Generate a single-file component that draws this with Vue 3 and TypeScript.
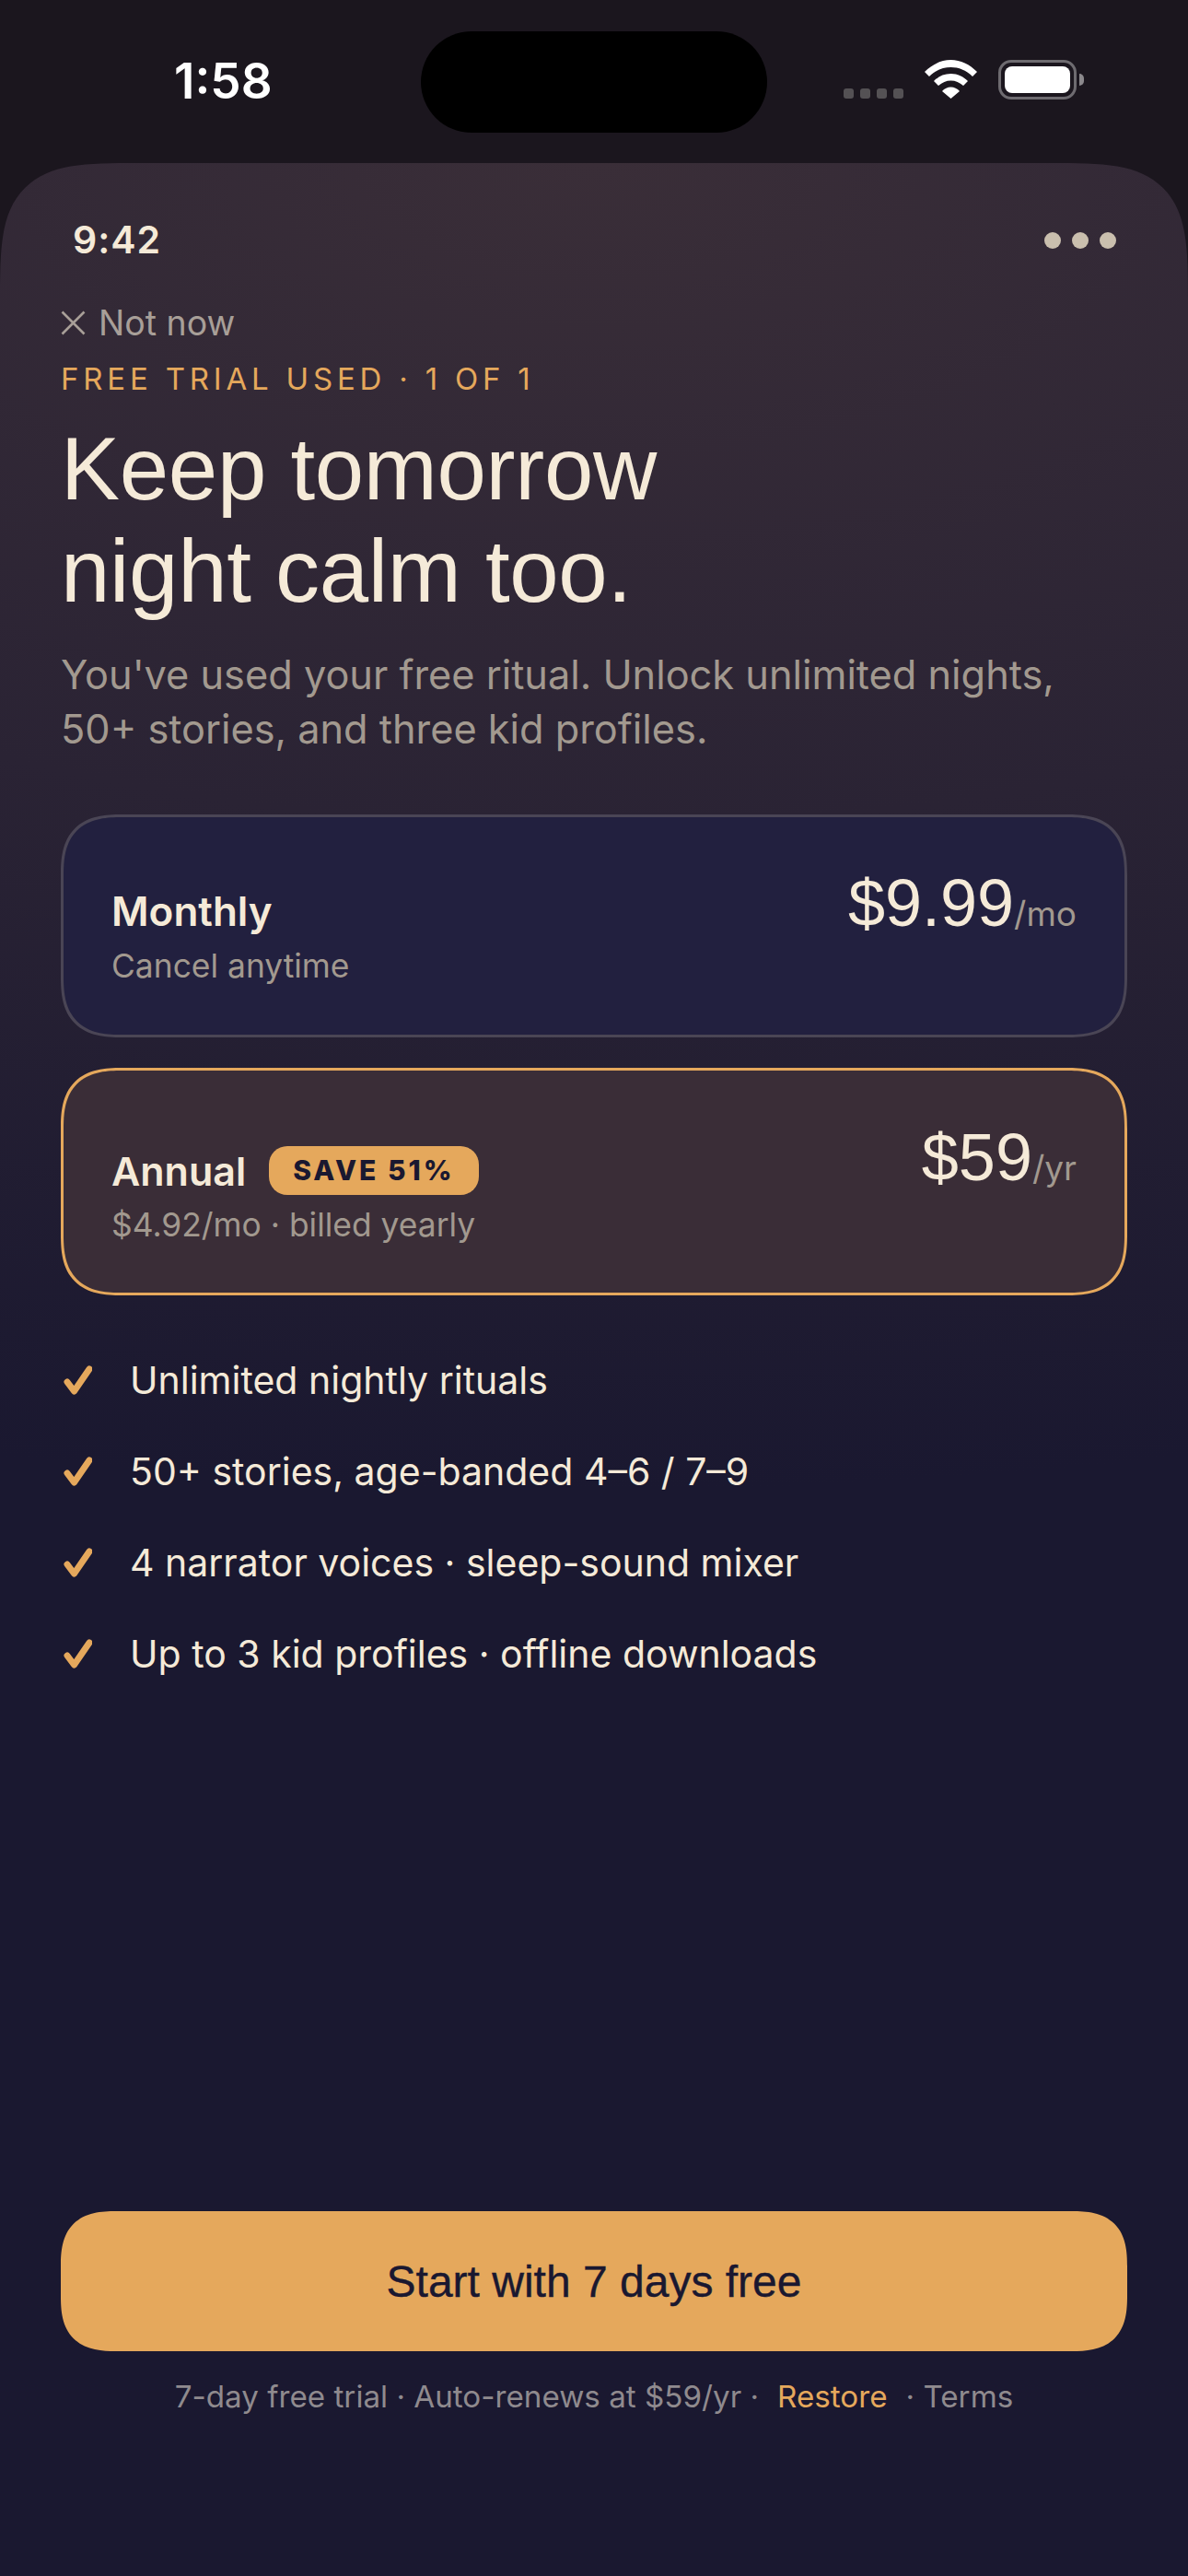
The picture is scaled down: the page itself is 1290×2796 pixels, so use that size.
<template>
  <div class="phone">
    <header class="status-bar">
      <span class="clock">1:58</span>
      <div class="island"></div>
      <div class="status-icons">
        <div class="signal">
          <i v-for="n in 4" :key="n"></i>
        </div>
        <svg class="wifi" width="57" height="42" viewBox="0 0 57 42" fill="#fff">
          <path d="M0 13C8 5 18 0 28.5 0S49 5 57 13L52 18C45 11 37 8 28.5 8S12 11 5 18Z" />
          <path d="M10 23C15 18 21 15 28.5 15S42 18 47 23L42 28C38 24.5 33.5 22.5 28.5 22.5S19 24.5 15 28Z" />
          <path d="M19 34C21.5 31 25 29.5 28.5 29.5S35.5 31 38 34L28.5 42Z" />
        </svg>
        <div class="battery"><div class="battery-level"></div></div>
      </div>
    </header>

    <main class="sheet">
      <div class="sheet-head">
        <span class="sheet-time">9:42</span>
        <div class="more">
          <i v-for="n in 3" :key="n"></i>
        </div>
      </div>

      <div class="close">
        <svg width="27" height="27" viewBox="0 0 27 27" fill="none" stroke="#a89f98" stroke-width="2.6">
          <path d="M1.5 1.5L25.5 25.5M25.5 1.5L1.5 25.5" />
        </svg>
        <span>Not now</span>
      </div>

      <div class="eyebrow">FREE TRIAL USED · 1 OF 1</div>
      <h1 class="title">Keep tomorrow<br />night calm too.</h1>
      <p class="lead">You've used your free ritual. Unlock unlimited nights,<br />50+ stories, and three kid profiles.</p>

      <div class="plans">
        <div
          v-for="plan in plans"
          :key="plan.name"
          class="plan"
          :class="{ selected: plan.selected }"
        >
          <div class="plan-left">
            <div class="plan-name-row">
              <span class="plan-name">{{ plan.name }}</span>
              <span v-if="plan.badge" class="badge">{{ plan.badge }}</span>
            </div>
            <div class="plan-sub">{{ plan.sub }}</div>
          </div>
          <div class="plan-price">{{ plan.price }}<span class="plan-unit">{{ plan.unit }}</span></div>
        </div>
      </div>

      <ul class="features">
        <li v-for="item in features" :key="item">
          <svg width="34" height="32" viewBox="0 0 34 32" fill="none" stroke="#e5a85c" stroke-width="7" stroke-linecap="round" stroke-linejoin="round">
            <path d="M7 18L14.5 28L31 4" />
          </svg>
          <span>{{ item }}</span>
        </li>
      </ul>

      <button class="cta">Start with 7 days free</button>
      <div class="legal">
        <span>7-day free trial · Auto-renews at $59/yr · </span>
        <span class="restore">Restore</span>
        <span>· Terms</span>
      </div>
    </main>
  </div>
</template>

<script setup lang="ts">
interface Plan {
  name: string
  sub: string
  price: string
  unit: string
  badge?: string
  selected?: boolean
}

const plans: Plan[] = [
  { name: 'Monthly', sub: 'Cancel anytime', price: '$9.99', unit: '/mo' },
  { name: 'Annual', sub: '$4.92/mo · billed yearly', price: '$59', unit: '/yr', badge: 'SAVE 51%', selected: true }
]

const features = [
  'Unlimited nightly rituals',
  '50+ stories, age-banded 4–6 / 7–9',
  '4 narrator voices · sleep-sound mixer',
  'Up to 3 kid profiles · offline downloads'
]
</script>

<style>
html,
body {
  margin: 0;
  background: #1a1830;
}
</style>

<style scoped>
.phone {
  width: 1290px;
  height: 2796px;
  display: flex;
  flex-direction: column;
  background: #1b161e;
  font-family: Inter, "Liberation Sans", sans-serif;
  overflow: hidden;
}

.status-bar {
  height: 177px;
  flex-shrink: 0;
  display: grid;
  grid-template-columns: 1fr 376px 1fr;
  box-sizing: border-box;
  padding-top: 34px;
}

.clock {
  margin: 22px 0 0 189px;
  font: 600 53px/64px Inter, sans-serif;
  color: #fff;
}

.island {
  height: 110px;
  border-radius: 55px;
  background: #000;
}

.status-icons {
  display: flex;
  align-items: flex-start;
  margin: 31px 0 0 83px;
}

.signal {
  display: flex;
  gap: 7px;
  margin-top: 31px;
  margin-right: 23px;
}

.signal i {
  width: 11px;
  height: 11px;
  border-radius: 3px;
  background: #545154;
}

.wifi {
  margin-right: 23px;
}

.battery {
  position: relative;
  width: 85px;
  height: 43px;
  box-sizing: border-box;
  border: 3px solid #6e6b70;
  border-radius: 14px;
  padding: 4px;
}

.battery::after {
  content: '';
  position: absolute;
  left: 85px;
  top: 12px;
  width: 5px;
  height: 13px;
  border-radius: 0 5px 5px 0;
  background: #8b888c;
}

.battery-level {
  height: 100%;
  border-radius: 8px;
  background: #fff;
}

.sheet {
  flex: 1;
  display: flex;
  flex-direction: column;
  box-sizing: border-box;
  padding: 54px 66px 172px;
  border-radius: 150px 150px 0 0;
  corner-shape: superellipse(1.8);
  background: radial-gradient(2880px 1440px at 50% 0, #3a2e38 0, #1a1830 100%) #1a1830;
}

.sheet-head {
  display: flex;
  justify-content: space-between;
  align-items: center;
  height: 58px;
  margin-bottom: 2px;
  padding: 0 12px 0 13px;
}

.sheet-time {
  font-size: 41px;
  font-weight: 600;
  letter-spacing: 1px;
  color: #f5ead8;
}

.more {
  display: flex;
  gap: 12px;
  margin-top: 2px;
}

.more i {
  width: 18px;
  height: 18px;
  border-radius: 50%;
  background: #cabfae;
}

.close {
  display: flex;
  align-items: center;
  gap: 14px;
  height: 50px;
  margin-top: 34px;
  font-size: 37.5px;
  color: #a89f98;
}

.eyebrow {
  margin-top: 16px;
  font-size: 33px;
  line-height: 40px;
  letter-spacing: 4.8px;
  color: #e5a85c;
}

.title {
  margin: 22px 0 0;
  font: 400 96px/111px "Liberation Sans", sans-serif;
  letter-spacing: -0.3px;
  color: #f5ead8;
}

.lead {
  margin: 28px 0 0;
  font-size: 43.3px;
  line-height: 59px;
  color: #a2998f;
}

.plans {
  display: flex;
  flex-direction: column;
  gap: 33px;
  margin-top: 63px;
}

.plan {
  display: flex;
  justify-content: space-between;
  align-items: flex-start;
  padding: 53px 52px 50px 52px;
  border: 3px solid #4a4555;
  border-radius: 66px;
  corner-shape: superellipse(1.4);
  background: #22203f;
}

.plan.selected {
  padding-top: 54px;
  padding-bottom: 49px;
  border-color: #e5a85c;
  background: #3a2d37;
}

.plan-left {
  padding-top: 21px;
}

.selected .plan-left {
  padding-top: 24px;
}

.plan-name-row {
  display: flex;
  align-items: center;
  gap: 25px;
}

.plan-name {
  font-size: 44px;
  line-height: 56px;
  font-weight: 600;
  color: #f5ead8;
}

.selected .plan-name {
  font-size: 43px;
}

.badge {
  height: 53px;
  padding: 0 26px;
  margin: 4px 0 5px;
  border-radius: 20px;
  background: #e5a85c;
  font-size: 30px;
  line-height: 53px;
  font-weight: 800;
  letter-spacing: 3px;
  color: #1a1830;
}

.plan-sub {
  margin-top: 8px;
  font-size: 35.4px;
  line-height: 48px;
  color: #a2998f;
}

.selected .plan-sub {
  margin-top: 4px;
}

.plan-price {
  font: 400 72px/80px "Liberation Sans", sans-serif;
  color: #f5ead8;
}

.plan-unit {
  font-family: Inter, sans-serif;
  font-size: 37px;
  color: #a2998f;
}

.features {
  list-style: none;
  display: flex;
  flex-direction: column;
  gap: 39px;
  margin: 62px 0 0;
  padding: 0;
}

.features li {
  display: flex;
  align-items: center;
  gap: 41px;
  height: 60px;
  font-size: 41px;
  color: #f5ead8;
}

.cta {
  margin-top: auto;
  height: 152px;
  border: 0;
  border-radius: 60px;
  corner-shape: superellipse(1.4);
  background: #e5a85c;
  font: 400 48px "Liberation Sans", sans-serif;
  -webkit-text-stroke: 0.4px #1a1830;
  color: #1a1830;
}

.legal {
  display: flex;
  justify-content: center;
  gap: 20px;
  margin-top: 26px;
  font-size: 33.2px;
  line-height: 46px;
  color: #8f8a8e;
}

.restore {
  color: #e5a85c;
}
</style>
